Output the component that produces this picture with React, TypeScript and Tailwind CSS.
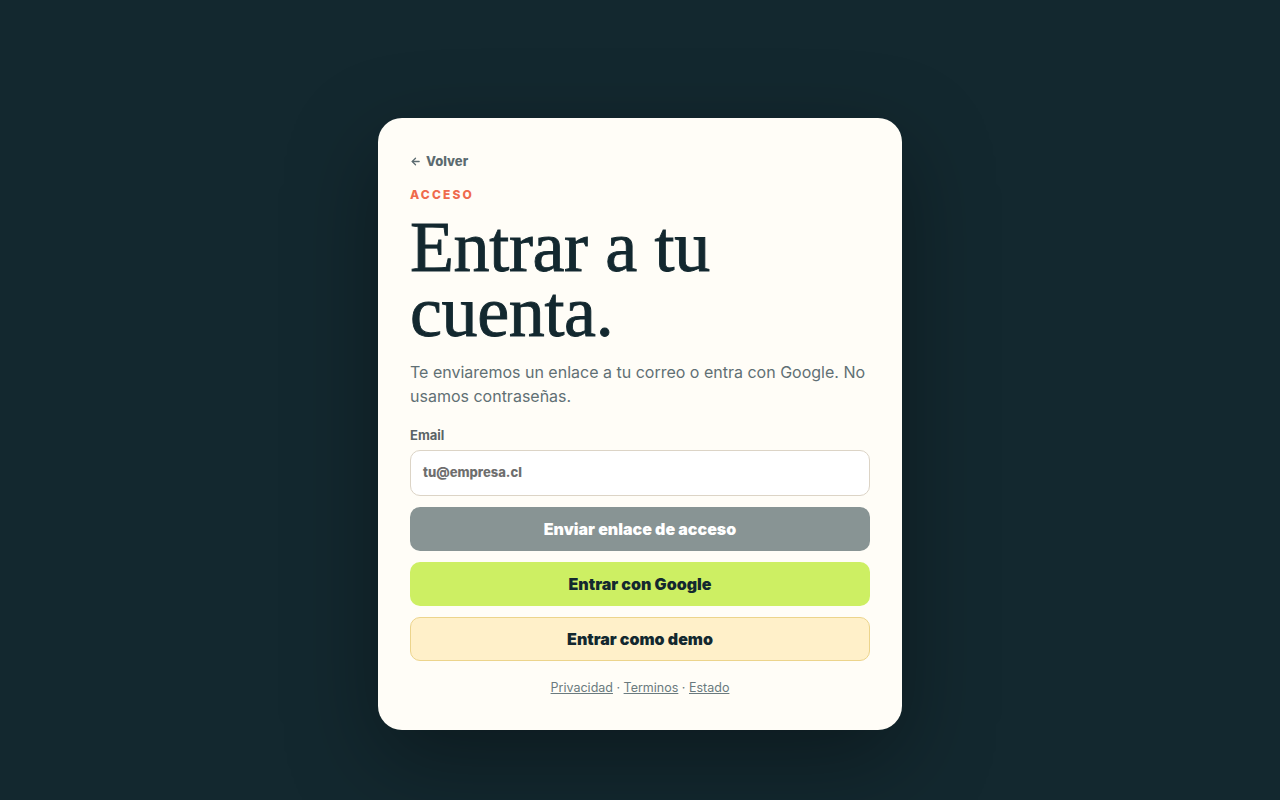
import React from "react";

export default function App() {
  return (
    <div
      className="min-h-screen w-full bg-[#13282f] flex items-center justify-center pt-12"
      style={{ fontFamily: "Inter, 'Noto Sans', sans-serif" }}
    >
      <div className="w-[524px] rounded-[24px] bg-[#fffdf7] px-8 pt-8 pb-8 shadow-[0_30px_90px_rgba(0,0,0,0.35)]">
        <a className="mt-px flex items-center gap-[5px] text-[13px] leading-5 font-extrabold text-[#5b6b70]">
          <svg width="11" height="11" viewBox="0 0 24 24" fill="none" stroke="currentColor" strokeWidth="2.8" strokeLinecap="round" strokeLinejoin="round">
            <path d="M20 12H5" />
            <path d="M12 19l-7-7 7-7" />
          </svg>
          <span>Volver</span>
        </a>
        <div className="mt-4 text-xs leading-4 font-extrabold tracking-[0.18em] text-[#ef6a4c]">
          ACCESO
        </div>
        <h1
          className="mt-3 text-[72px] leading-[0.9] font-normal text-[#13282f] tracking-[-0.005em] [-webkit-text-stroke:0.9px_#13282f]"
          style={{ fontFamily: "'Liberation Serif', serif" }}
        >
          Entrar a tu
          <br />
          cuenta.
        </h1>
        <p className="mt-[15px] text-base leading-6 text-[#5f7074]">
          Te enviaremos un enlace a tu correo o entra con Google. No usamos contraseñas.
        </p>
        <label className="mt-[17px] block text-[13px] leading-5 font-bold text-[#5b6466]">
          Email
        </label>
        <div className="mt-[5px] flex h-[46px] items-center rounded-[10px] border border-[#dcd4c6] bg-white px-3 text-[13px] font-extrabold text-[#6e6e6e]">
          tu@empresa.cl
        </div>
        <button className="mt-[11px] flex h-11 w-full items-center justify-center rounded-[10px] bg-[#889494] text-base font-black tracking-normal text-white">
          Enviar enlace de acceso
        </button>
        <button className="mt-[11px] flex h-11 w-full items-center justify-center rounded-[10px] bg-[#cdef63] text-base font-black tracking-normal text-[#13282f]">
          Entrar con Google
        </button>
        <button className="mt-[11px] flex h-11 w-full items-center justify-center rounded-[10px] border border-[#ecd48c] bg-[#fff0c9] text-base font-black tracking-normal text-[#13282f]">
          Entrar como demo
        </button>
        <div className="mt-[17px] text-center text-[12.5px] leading-5 text-[#6a7a7e]">
          <a className="underline">Privacidad</a>
          <span> · </span>
          <a className="underline">Terminos</a>
          <span> · </span>
          <a className="underline">Estado</a>
        </div>
      </div>
    </div>
  );
}
